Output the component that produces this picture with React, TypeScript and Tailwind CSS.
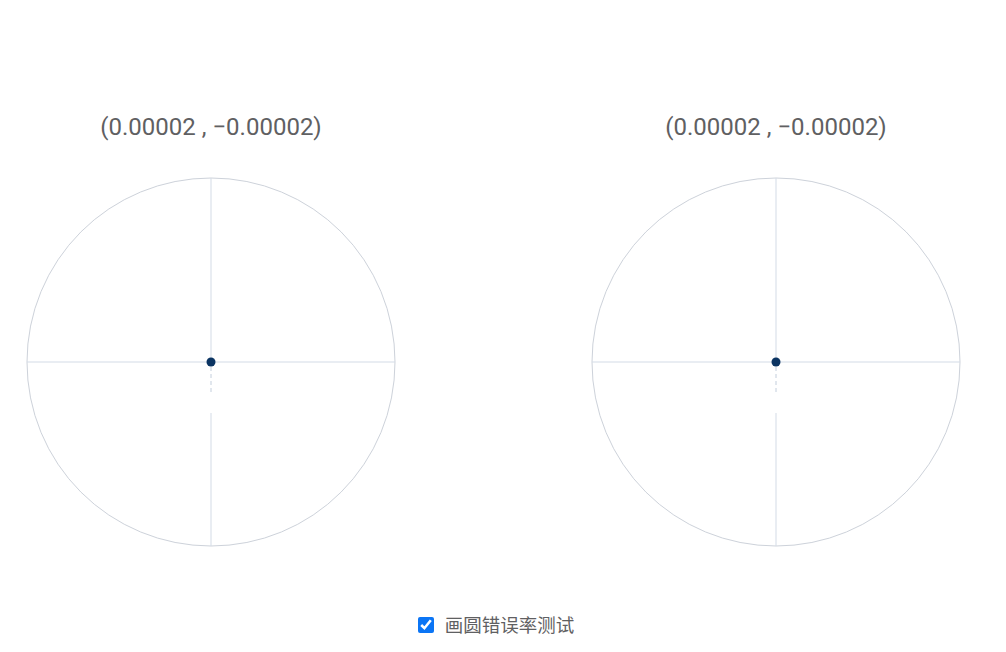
import { useState } from "react";

function Dial() {
  return (
    <div className="flex flex-col items-center w-[370px]">
      <div className="h-[28px] flex items-center text-[24px] leading-none text-[#5f6062] font-['Roboto',sans-serif] whitespace-nowrap">
        (0.00002 , −0.00002)
      </div>
      <svg width="370" height="370" viewBox="0 0 370 370" className="mt-[36px]">
        <circle cx="185" cy="185" r="184" fill="none" stroke="#cdd2da" strokeWidth="1" />
        <line x1="1" y1="185" x2="369" y2="185" stroke="#d3dbe6" strokeWidth="1" />
        <line x1="185" y1="1" x2="185" y2="185" stroke="#d3dbe6" strokeWidth="1" />
        <line x1="185" y1="190" x2="185" y2="215" stroke="#c3cedc" strokeWidth="1" strokeDasharray="4 3" />
        <line x1="185" y1="236" x2="185" y2="369" stroke="#d3dbe6" strokeWidth="1" />
        <circle cx="185" cy="185" r="4.5" fill="#0b3462" />
      </svg>
    </div>
  );
}

export default function App() {
  const [checked, setChecked] = useState(true);

  return (
    <div className="w-[1006px] h-[652px] bg-white flex flex-col">
      <div className="flex pl-[26px] gap-[195px] pt-[113px]">
        <Dial />
        <Dial />
      </div>
      <label className="mt-[64px] flex items-center justify-center gap-[11px] font-['Noto_Sans_CJK_SC',sans-serif] text-[18.5px] text-[#5f6062] ml-[-14px]">
        <input
          type="checkbox"
          checked={checked}
          onChange={() => setChecked(!checked)}
          className="w-[16px] h-[16px] accent-[#0b75f5]"
        />
        画圆错误率测试
      </label>
    </div>
  );
}
